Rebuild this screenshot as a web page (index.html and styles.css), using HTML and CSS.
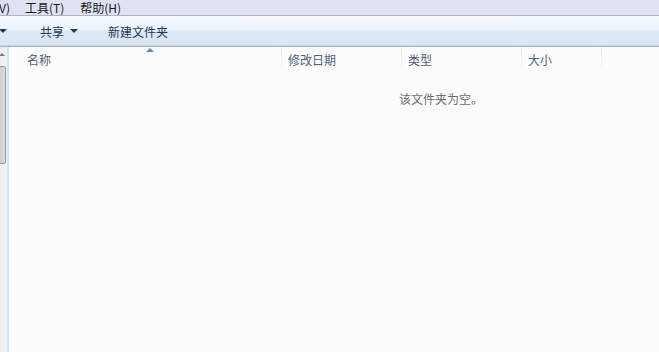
FILE: index.html
```html
<!DOCTYPE html>
<html lang="zh-CN">
<head>
<meta charset="utf-8">
<link rel="stylesheet" href="styles.css">
</head>
<body>
<div class="menubar">
  <span class="menu m-first">V)</span>
  <span class="menu">工具(T)</span>
  <span class="menu">帮助(H)</span>
</div>
<div class="toolbar">
  <span class="drop first"><span class="caret"></span></span>
  <span class="tool">共享<span class="caret"></span></span>
  <span class="tool">新建文件夹</span>
</div>
<div class="main">
  <div class="nav">
    <div class="uparrow"></div>
    <div class="thumb"></div>
  </div>
  <div class="content">
    <div class="header">
      <div class="col c-name">名称<span class="sort"></span></div>
      <div class="col c-date">修改日期</div>
      <div class="col c-type">类型</div>
      <div class="col c-size">大小</div>
      <div class="col c-rest"></div>
    </div>
    <div class="empty">该文件夹为空。</div>
  </div>
</div>
</body>
</html>
```
FILE: styles.css
```css
html, body {
  margin: 0;
  padding: 0;
  width: 659px;
  height: 352px;
  overflow: hidden;
  background: #fcfcfc;
  font-family: "Noto Sans CJK SC", "Noto Sans", sans-serif;
  font-size: 12px;
}
.menubar {
  height: 15px;
  background: #dfe3f1;
  border-bottom: 1px solid #aab4c8;
  display: flex;
  align-items: center;
  color: #1a1a1a;
  line-height: 15px;
}
.menu { margin-right: 16px; }
.m-first { margin-left: -1px; margin-right: 15px; }
.toolbar {
  height: 30px;
  background: linear-gradient(#f6f9fe 0%, #eef4fc 45%, #dde8f5 50%, #dbe6f4 100%);
  border-bottom: 1px solid #a5b3c7;
  box-shadow: inset 0 -1px 0 #c9d6e6;
  display: flex;
  align-items: center;
  color: #1e395b;
}
.caret {
  display: inline-block;
  width: 0;
  height: 0;
  border-left: 4px solid transparent;
  border-right: 4px solid transparent;
  border-top: 4px solid #1e395b;
  vertical-align: middle;
  margin-left: 6px;
}
.drop.first { margin-left: -2px; width: 42px; display: flex; align-items: center; }
.drop.first .caret { margin-left: 1px; }
.tool { margin-right: 30px; display: flex; align-items: center; }
.main {
  display: flex;
  height: 305px;
}
.nav {
  width: 7px;
  background: #f0f0f0;
  border-right: 2px solid #d6e5f5;
  position: relative;
  flex: none;
}
.uparrow {
  position: absolute;
  left: -1px;
  top: 6px;
  width: 0;
  height: 0;
  border-left: 3px solid transparent;
  border-right: 3px solid transparent;
  border-bottom: 3px solid #7a7a7a;
}
.thumb {
  position: absolute;
  left: -1px;
  top: 19px;
  width: 5px;
  height: 96px;
  background: linear-gradient(90deg, #cfcfcf, #dcdcdc);
  border: 1px solid #9a9a9a;
  border-radius: 2px;
}
.content {
  flex: 1;
  background: #fcfcfc;
}
.header {
  display: flex;
  height: 24px;
  margin-left: 11px;
  color: #4c607a;
}
.col {
  position: relative;
  box-sizing: border-box;
  padding-left: 6px;
  line-height: 24px;
  padding-top: 1px;
  border-right: 1px solid;
  border-image: linear-gradient(#e3e9f0, #edf1f6 70%, #fcfcfc) 1;
}
.c-name { width: 262px; padding-left: 7px; }
.c-date { width: 120px; }
.c-type { width: 120px; }
.c-size { width: 80px; }
.c-rest { flex: 1; border-right: none; }
.sort {
  position: absolute;
  left: 126px;
  top: 1px;
  width: 0;
  height: 0;
  border-left: 4px solid transparent;
  border-right: 4px solid transparent;
  border-bottom: 4px solid #5b8bbf;
}
.empty {
  margin-top: 20px;
  padding-left: 390px;
  color: #6d6d6d;
  line-height: 16px;
}
```
